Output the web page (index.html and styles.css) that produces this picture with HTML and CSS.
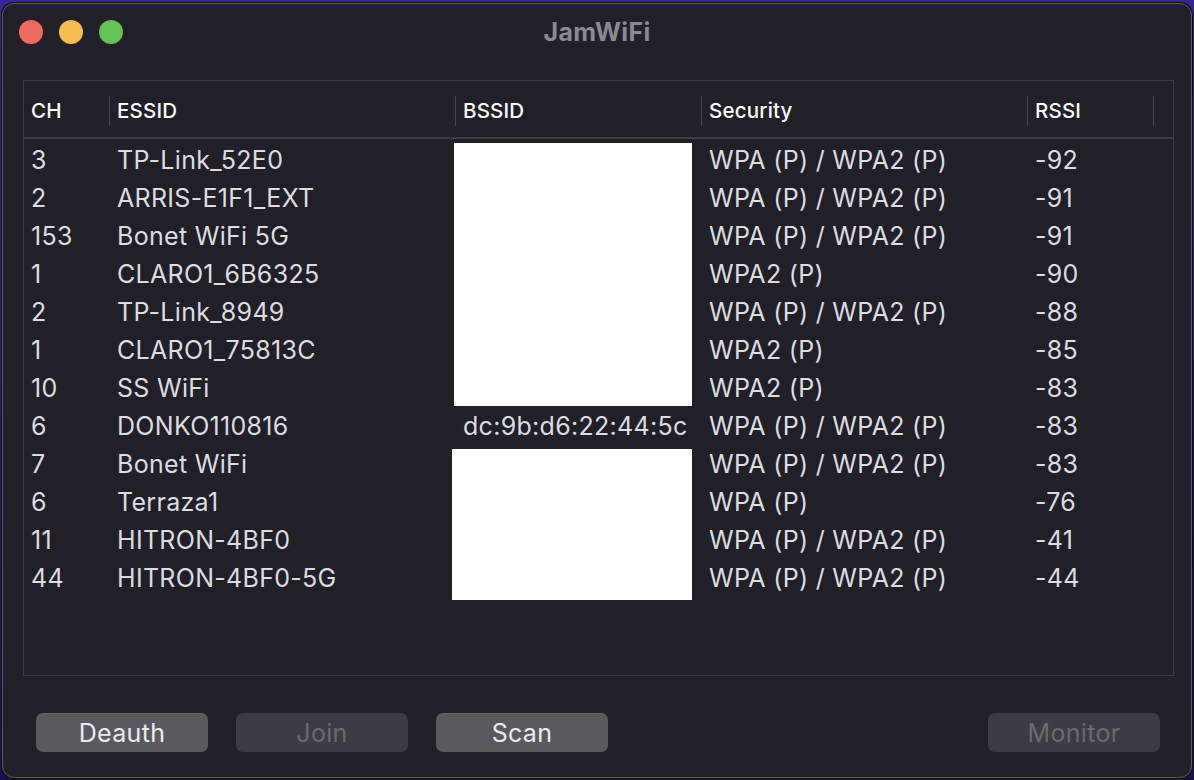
FILE: index.html
```html
<!DOCTYPE html>
<html>
<head>
<meta charset="utf-8">
<link rel="stylesheet" href="styles.css">
</head>
<body>
<div class="window">
  <div class="titlebar">
    <div class="lights">
      <span class="light red"></span>
      <span class="light yellow"></span>
      <span class="light green"></span>
    </div>
    <div class="title">JamWiFi</div>
  </div>
  <div class="table">
    <div class="thead">
      <div class="th">CH</div>
      <div class="th sep">ESSID</div>
      <div class="th sep">BSSID</div>
      <div class="th sep">Security</div>
      <div class="th sep">RSSI</div>
      <div class="th sep"></div>
    </div>
    <div class="tbody">
      <div class="row"><span>3</span><span>TP-Link_52E0</span><span></span><span>WPA (P) / WPA2 (P)</span><span>-92</span></div>
      <div class="row"><span>2</span><span>ARRIS-E1F1_EXT</span><span></span><span>WPA (P) / WPA2 (P)</span><span>-91</span></div>
      <div class="row"><span>153</span><span>Bonet WiFi 5G</span><span></span><span>WPA (P) / WPA2 (P)</span><span>-91</span></div>
      <div class="row"><span>1</span><span>CLARO1_6B6325</span><span></span><span>WPA2 (P)</span><span>-90</span></div>
      <div class="row"><span>2</span><span>TP-Link_8949</span><span></span><span>WPA (P) / WPA2 (P)</span><span>-88</span></div>
      <div class="row"><span>1</span><span>CLARO1_75813C</span><span></span><span>WPA2 (P)</span><span>-85</span></div>
      <div class="row"><span>10</span><span>SS WiFi</span><span></span><span>WPA2 (P)</span><span>-83</span></div>
      <div class="row"><span>6</span><span>DONKO110816</span><span class="mac">dc:9b:d6:22:44:5c</span><span>WPA (P) / WPA2 (P)</span><span>-83</span></div>
      <div class="row"><span>7</span><span>Bonet WiFi</span><span></span><span>WPA (P) / WPA2 (P)</span><span>-83</span></div>
      <div class="row"><span>6</span><span>Terraza1</span><span></span><span>WPA (P)</span><span>-76</span></div>
      <div class="row"><span>11</span><span>HITRON-4BF0</span><span></span><span>WPA (P) / WPA2 (P)</span><span>-41</span></div>
      <div class="row"><span>44</span><span>HITRON-4BF0-5G</span><span></span><span>WPA (P) / WPA2 (P)</span><span>-44</span></div>
      <div class="redact r1"></div>
      <div class="redact r2"></div>
    </div>
  </div>
  <div class="buttons">
    <button class="btn">Deauth</button>
    <button class="btn disabled">Join</button>
    <button class="btn">Scan</button>
    <span class="spacer"></span>
    <button class="btn disabled">Monitor</button>
  </div>
</div>
</body>
</html>
```

FILE: styles.css
```css
html, body {
  margin: 0;
  padding: 0;
}
body {
  width: 1194px;
  height: 780px;
  overflow: hidden;
  background: linear-gradient(180deg, #3a2494 0%, #2a1a78 60%, #1c1248 100%);
  font-family: Inter, "Liberation Sans", sans-serif;
}
.window {
  margin: 3px 0 0 2px;
  width: 1188px;
  height: 773px;
  background: #211f28;
  border: 1px solid #5d5b63;
  border-radius: 12px;
  box-shadow: 0 0 0 1px #0d0c12;
  display: flex;
  flex-direction: column;
  overflow: hidden;
}
.titlebar {
  height: 76px;
  position: relative;
  flex: none;
}
.lights {
  display: flex;
  gap: 16px;
  padding: 16px 0 0 16px;
}
.light {
  width: 24px;
  height: 24px;
  border-radius: 50%;
}
.red { background: #ee6a5f; }
.yellow { background: #f5bd4f; }
.green { background: #61c454; }
.title {
  position: absolute;
  left: 0;
  right: 0;
  top: 13px;
  text-align: center;
  color: #8b8a90;
  font-weight: 700;
  font-size: 25px;
  letter-spacing: 0.3px;
}
.table {
  margin-left: 20px;
  width: 1149px;
  height: 594px;
  border: 1px solid #3c3b41;
  flex: none;
}
.thead {
  display: grid;
  grid-template-columns: 85px 346px 246px 326px 126px 1fr;
  height: 58px;
  border-bottom: 2px solid #3e3d44;
  align-items: center;
  padding-top: 4px;
  box-sizing: border-box;
}
.th {
  color: #ffffff;
  font-size: 20.5px;
  font-weight: 500;
  letter-spacing: 0.2px;
  padding-left: 7px;
  height: 30px;
  line-height: 30px;
  position: relative;
}
.th.sep {
  border-left: 1px solid #48474e;
  padding-left: 7px;
}
.tbody {
  position: relative;
  padding-top: 2px;
}
.row {
  display: grid;
  grid-template-columns: 85px 346px 246px 326px 126px;
  height: 38px;
  align-items: center;
  color: #dddce0;
  font-size: 25px;
  letter-spacing: 0.3px;
}
.row span {
  padding-left: 7px;
  white-space: nowrap;
}
.row span:nth-child(n+2) {
  padding-left: 8px;
}
.row .mac {
  padding-left: 7px;
}
.redact {
  position: absolute;
  background: #ffffff;
}
.r1 {
  left: 430px;
  width: 238px;
  top: 4px;
  height: 263px;
}
.r2 {
  left: 428px;
  width: 240px;
  top: 310px;
  height: 151px;
}
.buttons {
  display: flex;
  gap: 28px;
  padding: 37px 0 0 33px;
  padding-right: 31px;
}
.spacer {
  flex: 1;
}
.btn {
  width: 172px;
  height: 39px;
  border: none;
  border-radius: 7px;
  background: #5b5960;
  color: #ecebee;
  font-family: Inter, "Liberation Sans", sans-serif;
  font-size: 25px;
  letter-spacing: 0.3px;
  padding: 0;
  box-shadow: inset 0 1px 0 rgba(255,255,255,0.08);
}
.btn.disabled {
  background: #3d3b43;
  color: #6b6a70;
  box-shadow: none;
}
```
